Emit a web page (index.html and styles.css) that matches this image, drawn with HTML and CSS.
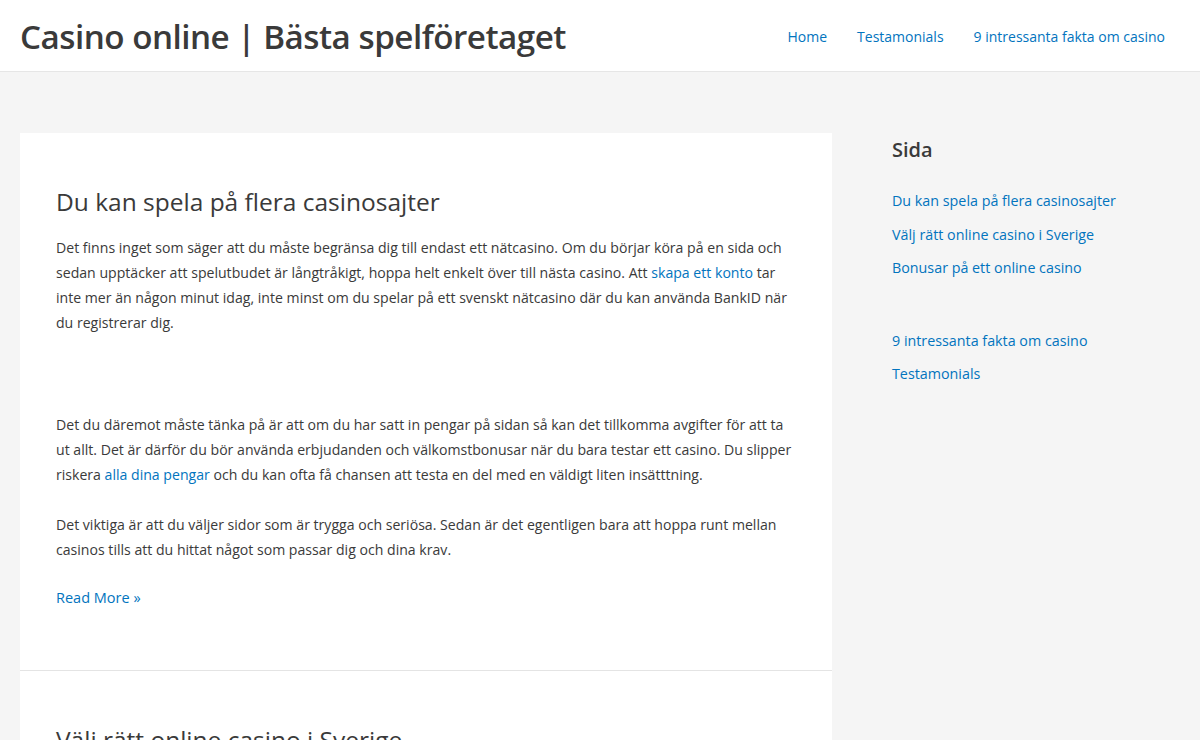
FILE: index.html
```html
<!DOCTYPE html>
<html lang="sv">
<head>
<meta charset="utf-8">
<title>Casino online | Bästa spelföretaget</title>
<link rel="stylesheet" href="styles.css">
</head>
<body>
<header class="site-header">
  <div class="site-title">Casino online | Bästa spelföretaget</div>
  <nav class="main-nav">
    <a href="#">Home</a>
    <a href="#">Testamonials</a>
    <a href="#">9 intressanta fakta om casino</a>
  </nav>
</header>
<div class="site-content">
  <main class="primary">
    <article class="post">
      <h2 class="entry-title">Du kan spela på flera casinosajter</h2>
      <p>Det finns inget som säger att du måste begränsa dig till endast ett nätcasino. Om du börjar köra på en sida och<br>sedan upptäcker att spelutbudet är långtråkigt, hoppa helt enkelt över till nästa casino. Att <a href="#">skapa ett konto</a> tar<br>inte mer än någon minut idag, inte minst om du spelar på ett svenskt nätcasino där du kan använda BankID när<br>du registrerar dig.</p>
      <p class="spaced">Det du däremot måste tänka på är att om du har satt in pengar på sidan så kan det tillkomma avgifter för att ta<br>ut allt. Det är därför du bör använda erbjudanden och välkomstbonusar när du bara testar ett casino. Du slipper<br>riskera <a href="#">alla dina pengar</a> och du kan ofta få chansen att testa en del med en väldigt liten insätttning.</p>
      <p>Det viktiga är att du väljer sidor som är trygga och seriösa. Sedan är det egentligen bara att hoppa runt mellan<br>casinos tills att du hittat något som passar dig och dina krav.</p>
      <a class="read-more" href="#">Read More »</a>
    </article>
    <article class="post">
      <h2 class="entry-title">Välj rätt online casino i Sverige</h2>
    </article>
  </main>
  <aside class="sidebar">
    <h2 class="widget-title">Sida</h2>
    <ul class="widget-list">
      <li><a href="#">Du kan spela på flera casinosajter</a></li>
      <li><a href="#">Välj rätt online casino i Sverige</a></li>
      <li><a href="#">Bonusar på ett online casino</a></li>
    </ul>
    <ul class="widget-list second">
      <li><a href="#">9 intressanta fakta om casino</a></li>
      <li><a href="#">Testamonials</a></li>
    </ul>
  </aside>
</div>
</body>
</html>
```
FILE: styles.css
```css
html, body {
  margin: 0;
  padding: 0;
}
body {
  background: #f5f5f5;
  font-family: "Open Sans", "Noto Sans", sans-serif;
  color: #3a3a3a;
  font-size: 14.1px;
  overflow: hidden;
}
a {
  color: #0274be;
  text-decoration: none;
}
.site-header {
  background: #fff;
  height: 72px;
  border-bottom: 1px solid #e6e6e6;
  box-sizing: border-box;
  display: flex;
  align-items: center;
  justify-content: space-between;
  padding: 0 35px 0 20px;
}
.site-title {
  font-size: 33.2px;
  font-weight: 600;
  color: #3a3a3a;
  letter-spacing: -0.5px;
  margin-top: 2px;
}
.main-nav {
  display: flex;
  gap: 30px;
  font-size: 14px;
  margin-top: 1px;
}
.site-content {
  display: flex;
  padding: 61px 0 0 20px;
  gap: 60px;
}
.primary {
  width: 812px;
  flex: none;
}
.post {
  background: #fff;
  padding: 53px 36px 63px 36px;
  border-bottom: 1px solid #e4e4e4;
}
.entry-title {
  font-size: 24.5px;
  font-weight: 400;
  margin: 0 0 17px 0;
  line-height: 1.3;
  color: #3a3a3a;
}
.post p {
  margin: 0 0 25px 0;
  line-height: 25px;
  white-space: nowrap;
}
.post p.spaced {
  margin-top: 77px;
}
.read-more {
  display: inline-block;
  font-size: 14.5px;
  margin-top: 1px;
}
.sidebar {
  flex: 1;
  padding-top: 3px;
}
.widget-title {
  font-size: 20px;
  font-weight: 600;
  margin: 0 0 28px 0;
  color: #3a3a3a;
}
.widget-list {
  list-style: none;
  margin: 0;
  padding: 0;
  font-size: 14.3px;
}
.widget-list li {
  height: 33.5px;
  line-height: 20px;
}
.widget-list.second {
  margin-top: 39px;
}
```
